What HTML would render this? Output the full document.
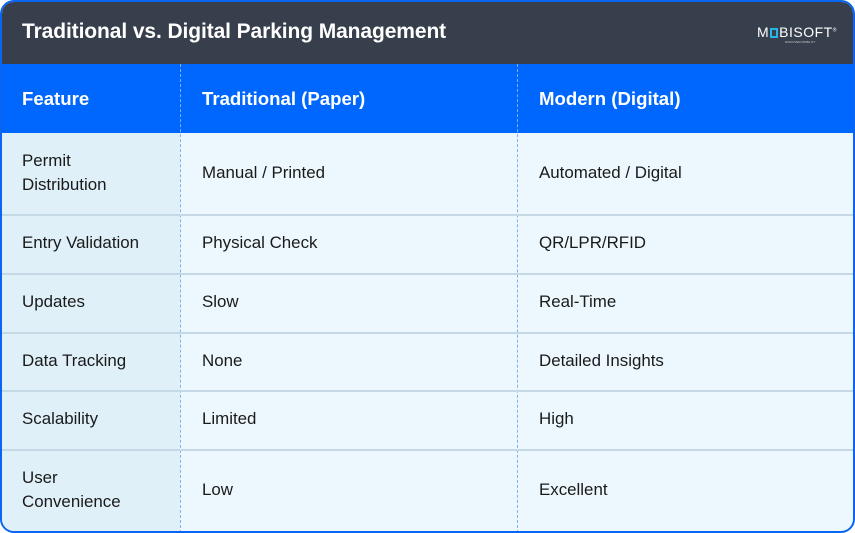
<!DOCTYPE html>
<html><head><meta charset="utf-8"><style>
*{margin:0;padding:0;box-sizing:border-box}
body{width:855px;height:533px;background:#fff;font-family:"Liberation Sans",Arial,sans-serif;overflow:hidden;position:relative}
.card{position:absolute;left:0;top:0;width:855px;height:533px;border:2px solid #0a66f0;border-radius:14px;overflow:hidden;background:#ecf8fe}
.ttl{position:absolute;left:0;top:0;width:851px;height:62px;background:#373f4c;color:#fff;font-weight:bold;font-size:21px;padding:18px 0 0 20px;letter-spacing:-0.1px}
.hd{position:absolute;left:0;top:62px;width:851px;height:69px;background:#0067fe;color:#fff;font-weight:bold;font-size:18.6px}
.hd span{position:absolute;top:24px}
.c1{position:absolute;left:0;top:131px;width:178px;height:400px;background:#dff0f8}
.vl{position:absolute;top:62px;height:469px;border-left:1px dashed #7eb1ee}
.hl{position:absolute;left:0;width:851px;height:2px;background:#c4d8e6}
.t{position:absolute;font-size:16.9px;color:#1a1a1a;line-height:24px}
.logo{position:absolute;left:755px;top:22px;color:#fff;font-size:14px;letter-spacing:0.5px;font-weight:normal}
</style></head><body>
<div class="card">
<div class="ttl">Traditional vs. Digital Parking Management</div>
<div class="logo">M<span style="display:inline-block;width:8px;height:10px;border:2px solid #29b4e8;vertical-align:-1px;margin:0 1px"></span>BISOFT<sup style="font-size:5px">®</sup>
<div style="font-size:3px;position:absolute;left:28px;top:16px;letter-spacing:0;color:#ccc">DISCOVER MOBILITY</div></div>
<div class="hd"><span style="left:20px">Feature</span><span style="left:200px">Traditional (Paper)</span><span style="left:537px">Modern (Digital)</span></div>
<div class="c1"></div>
<div class="vl" style="left:178px"></div>
<div class="vl" style="left:515px"></div>
<div class="hl" style="top:212px"></div>
<div class="hl" style="top:271px"></div>
<div class="hl" style="top:330px"></div>
<div class="hl" style="top:388px"></div>
<div class="hl" style="top:447px"></div>

<div class="t" style="left:20px;top:147px">Permit<br>Distribution</div>
<div class="t" style="left:200px;top:159px">Manual / Printed</div>
<div class="t" style="left:537px;top:159px">Automated / Digital</div>

<div class="t" style="left:20px;top:229px">Entry Validation</div>
<div class="t" style="left:200px;top:229px">Physical Check</div>
<div class="t" style="left:537px;top:229px">QR/LPR/RFID</div>

<div class="t" style="left:20px;top:288px">Updates</div>
<div class="t" style="left:200px;top:288px">Slow</div>
<div class="t" style="left:537px;top:288px">Real-Time</div>

<div class="t" style="left:20px;top:347px">Data Tracking</div>
<div class="t" style="left:200px;top:347px">None</div>
<div class="t" style="left:537px;top:347px">Detailed Insights</div>

<div class="t" style="left:20px;top:405px">Scalability</div>
<div class="t" style="left:200px;top:405px">Limited</div>
<div class="t" style="left:537px;top:405px">High</div>

<div class="t" style="left:20px;top:464px">User<br>Convenience</div>
<div class="t" style="left:200px;top:476px">Low</div>
<div class="t" style="left:537px;top:476px">Excellent</div>
</div>
</body></html>
